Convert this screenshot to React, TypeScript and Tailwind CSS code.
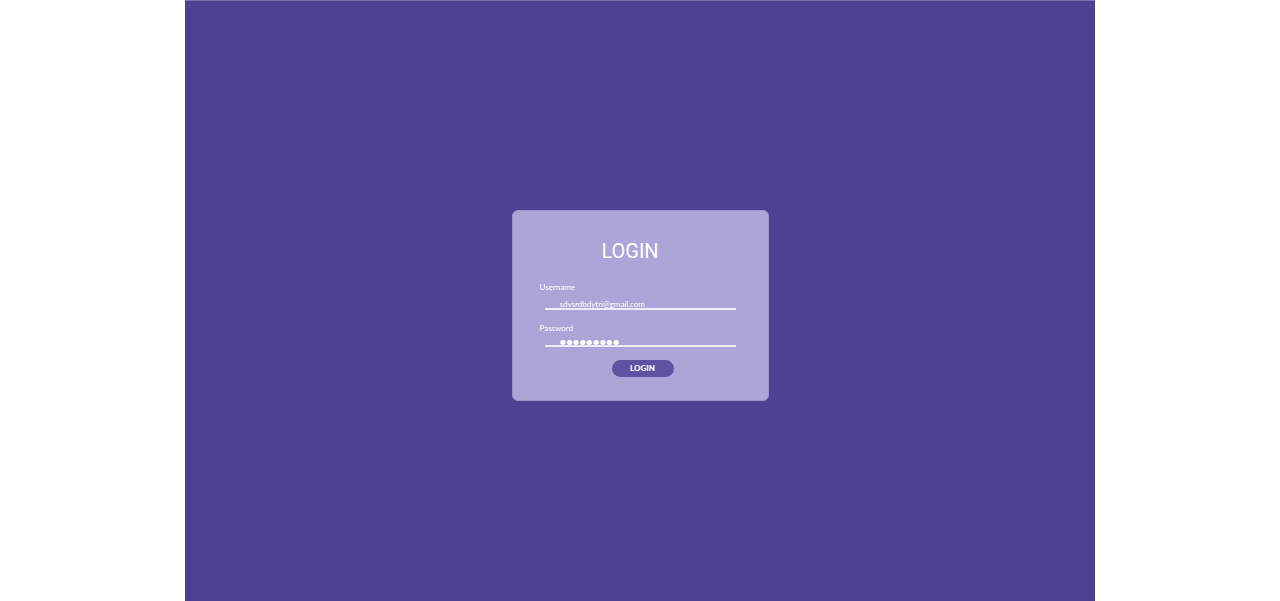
import { useState } from "react";

export default function App() {
  const [username, setUsername] = useState("sdvsrdbdytri@gmail.com");
  const [password, setPassword] = useState("abcdefghi");

  return (
    <div className="flex min-h-screen justify-center bg-white font-[Lato,sans-serif] text-white">
      <main className="flex w-full max-w-[910px] items-center justify-center border-t border-[#7a72aa] bg-[#4e4194] pt-2">
        <form
          className="flex w-full max-w-[257px] flex-col rounded-md border border-[#9d95ca] bg-[#aca5d8] px-[27px] pt-[26px] pb-[23px]"
          onSubmit={(event) => event.preventDefault()}
        >
          <h1 className="pr-5 text-center font-[Roboto,sans-serif] text-[20px] leading-7">
            LOGIN
          </h1>

          <label htmlFor="username" className="mt-4 text-[8px] leading-3">
            Username
          </label>
          <div className="mx-[5px] flex h-[17px] items-start border-b-2 border-[#eeecf8] pl-[15px]">
            <input
              id="username"
              type="text"
              value={username}
              onChange={(event) => setUsername(event.target.value)}
              className="h-[22px] w-full bg-transparent text-[8px] leading-3 outline-none"
            />
          </div>

          <label htmlFor="password" className="mt-3 text-[8px] leading-3">
            Password
          </label>
          <div className="mx-[5px] flex h-[13px] items-start border-b-2 border-[#eeecf8] pl-[15px]">
            <input
              id="password"
              type="password"
              value={password}
              onChange={(event) => setPassword(event.target.value)}
              className="h-[18px] w-full bg-transparent font-['Liberation_Sans',sans-serif] text-[19px] leading-4 outline-none"
            />
          </div>

          <button
            type="submit"
            className="mt-[13px] ml-[72px] h-[17px] w-[62px] rounded-full bg-[#6052a3] text-[8px] leading-3 font-black"
          >
            LOGIN
          </button>
        </form>
      </main>
    </div>
  );
}
